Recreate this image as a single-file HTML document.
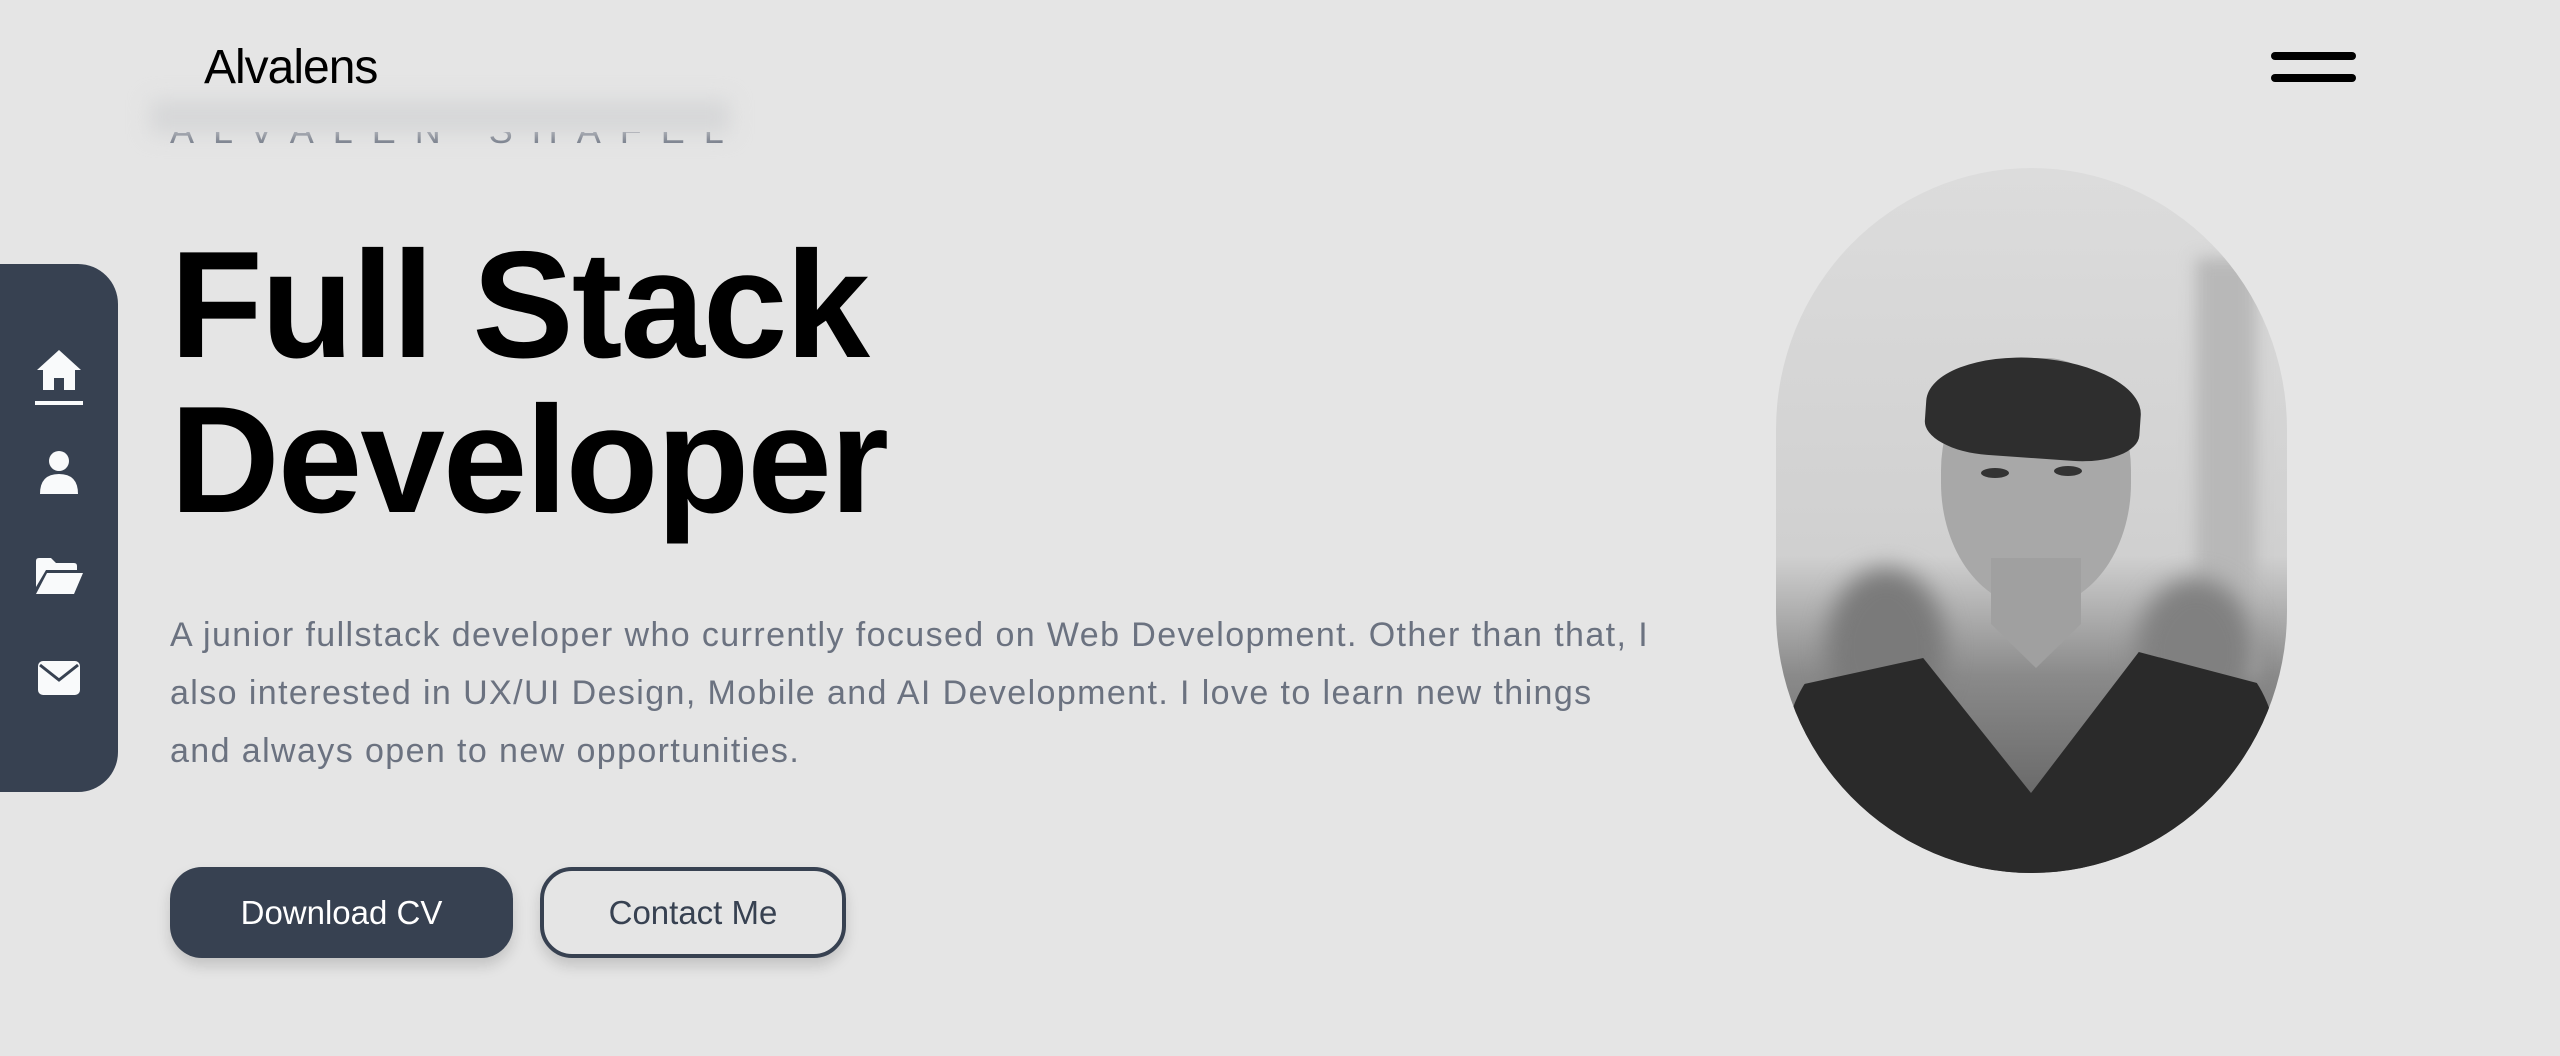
<!DOCTYPE html>
<html><head><meta charset="utf-8"><style>
*{margin:0;padding:0;box-sizing:border-box}
html,body{width:2560px;height:1056px;overflow:hidden;background:#e5e5e5;font-family:"Liberation Sans",sans-serif}
.logo{position:absolute;left:204px;top:40px;font-size:48px;color:#000;letter-spacing:-1px}
.burger{position:absolute;left:2271px;width:85px;height:8px;background:#000;border-radius:4px}
.sub{position:absolute;left:170px;top:110px;font-size:36px;letter-spacing:19px;color:#6b7280}
.hdr{position:absolute;left:150px;top:100px;width:580px;height:34px;background:#d6d7d8;filter:blur(10px)}
.side{position:absolute;left:0;top:264px;width:118px;height:528px;background:#374151;border-radius:0 40px 40px 0}
h1{position:absolute;left:170px;top:228px;font-size:152px;line-height:155px;font-weight:bold;color:#000;letter-spacing:-2px}
p{position:absolute;left:170px;top:606px;width:1750px;font-size:34px;line-height:58px;color:#6b7280;letter-spacing:1.4px}
.btn{position:absolute;top:867px;height:91px;border-radius:32px;font-size:33px;display:flex;align-items:center;justify-content:center;box-shadow:0 8px 14px rgba(0,0,0,.15)}
.photo{position:absolute;left:1776px;top:168px;width:511px;height:705px;border-radius:256px/262px;overflow:hidden;background:linear-gradient(#dcdcdc 0%,#d0d0d0 55%,#8a8a8a 72%,#555 100%)}
</style></head><body>
<div class="sub">ALVALEN SHAFEL</div>
<div style="position:absolute;left:0;top:0;width:2560px;height:132px;background:#e5e5e5"></div>
<div class="hdr"></div>
<div class="logo">Alvalens</div>
<div class="burger" style="top:52px"></div>
<div class="burger" style="top:74px"></div>

<div class="side">
<svg style="position:absolute;left:35px;top:84px" width="48" height="62" viewBox="0 0 48 62"><path d="M24 2 L2 22 L8 22 L8 42 L19 42 L19 30 L29 30 L29 42 L40 42 L40 22 L46 22 Z" fill="#f9fafb"/><rect x="0" y="53" width="48" height="4" fill="#f9fafb"/></svg>
<svg style="position:absolute;left:38px;top:186px" width="42" height="44" viewBox="0 0 42 44"><circle cx="21" cy="11" r="10" fill="#f9fafb"/><path d="M2 44 Q2 24 21 24 Q40 24 40 44 Z" fill="#f9fafb"/></svg>
<svg style="position:absolute;left:34px;top:293px" width="50" height="38" viewBox="0 0 50 38"><path d="M2 4 Q2 1 5 1 L17 1 L22 6 L40 6 Q43 6 43 9 L43 13 L12 13 L2 30 Z" fill="#f9fafb"/><path d="M13 16 L49 16 L40 37 L2 37 Z" fill="#f9fafb"/></svg>
<svg style="position:absolute;left:38px;top:397px" width="42" height="34" viewBox="0 0 42 34"><rect x="0" y="0" width="42" height="34" rx="5" fill="#f9fafb"/><path d="M2 4 L21 19 L40 4" stroke="#374151" stroke-width="3" fill="none"/></svg>
</div>

<h1>Full Stack<br>Developer</h1>
<p>A junior fullstack developer who currently focused on Web Development. Other than that, I<br>also interested in UX/UI Design, Mobile and AI Development. I love to learn new things<br>and always open to new opportunities.</p>

<div class="btn" style="left:170px;width:343px;background:#374151;color:#fff">Download CV</div>
<div class="btn" style="left:540px;width:306px;border:4px solid #374151;color:#374151">Contact Me</div>

<div class="photo">
<div style="position:absolute;left:420px;top:90px;width:60px;height:420px;background:#b8b8b8;filter:blur(8px)"></div>
<div style="position:absolute;left:50px;top:400px;width:120px;height:160px;border-radius:50%;background:#7a7a7a;filter:blur(12px)"></div>
<div style="position:absolute;left:360px;top:410px;width:120px;height:150px;border-radius:50%;background:#808080;filter:blur(12px)"></div>
<div style="position:absolute;left:10px;top:460px;width:490px;height:300px;background:#2a2a2a;border-radius:120px 120px 0 0;clip-path:polygon(0 20%,28% 10%,50% 55%,72% 8%,100% 20%,100% 100%,0 100%)"></div>
<div style="position:absolute;left:165px;top:190px;width:190px;height:250px;border-radius:45% 45% 50% 50%;background:#a8a8a8"></div>
<div style="position:absolute;left:215px;top:390px;width:90px;height:110px;background:#a0a0a0;clip-path:polygon(0 0,100% 0,100% 60%,50% 100%,0 60%)"></div>
<div style="position:absolute;left:150px;top:190px;width:215px;height:100px;border-radius:50% 50% 30% 30%;background:#2e2e2e;transform:rotate(4deg)"></div>
<div style="position:absolute;left:205px;top:300px;width:28px;height:10px;border-radius:50%;background:#333"></div>
<div style="position:absolute;left:278px;top:298px;width:28px;height:10px;border-radius:50%;background:#333"></div>
</div>
</body></html>
